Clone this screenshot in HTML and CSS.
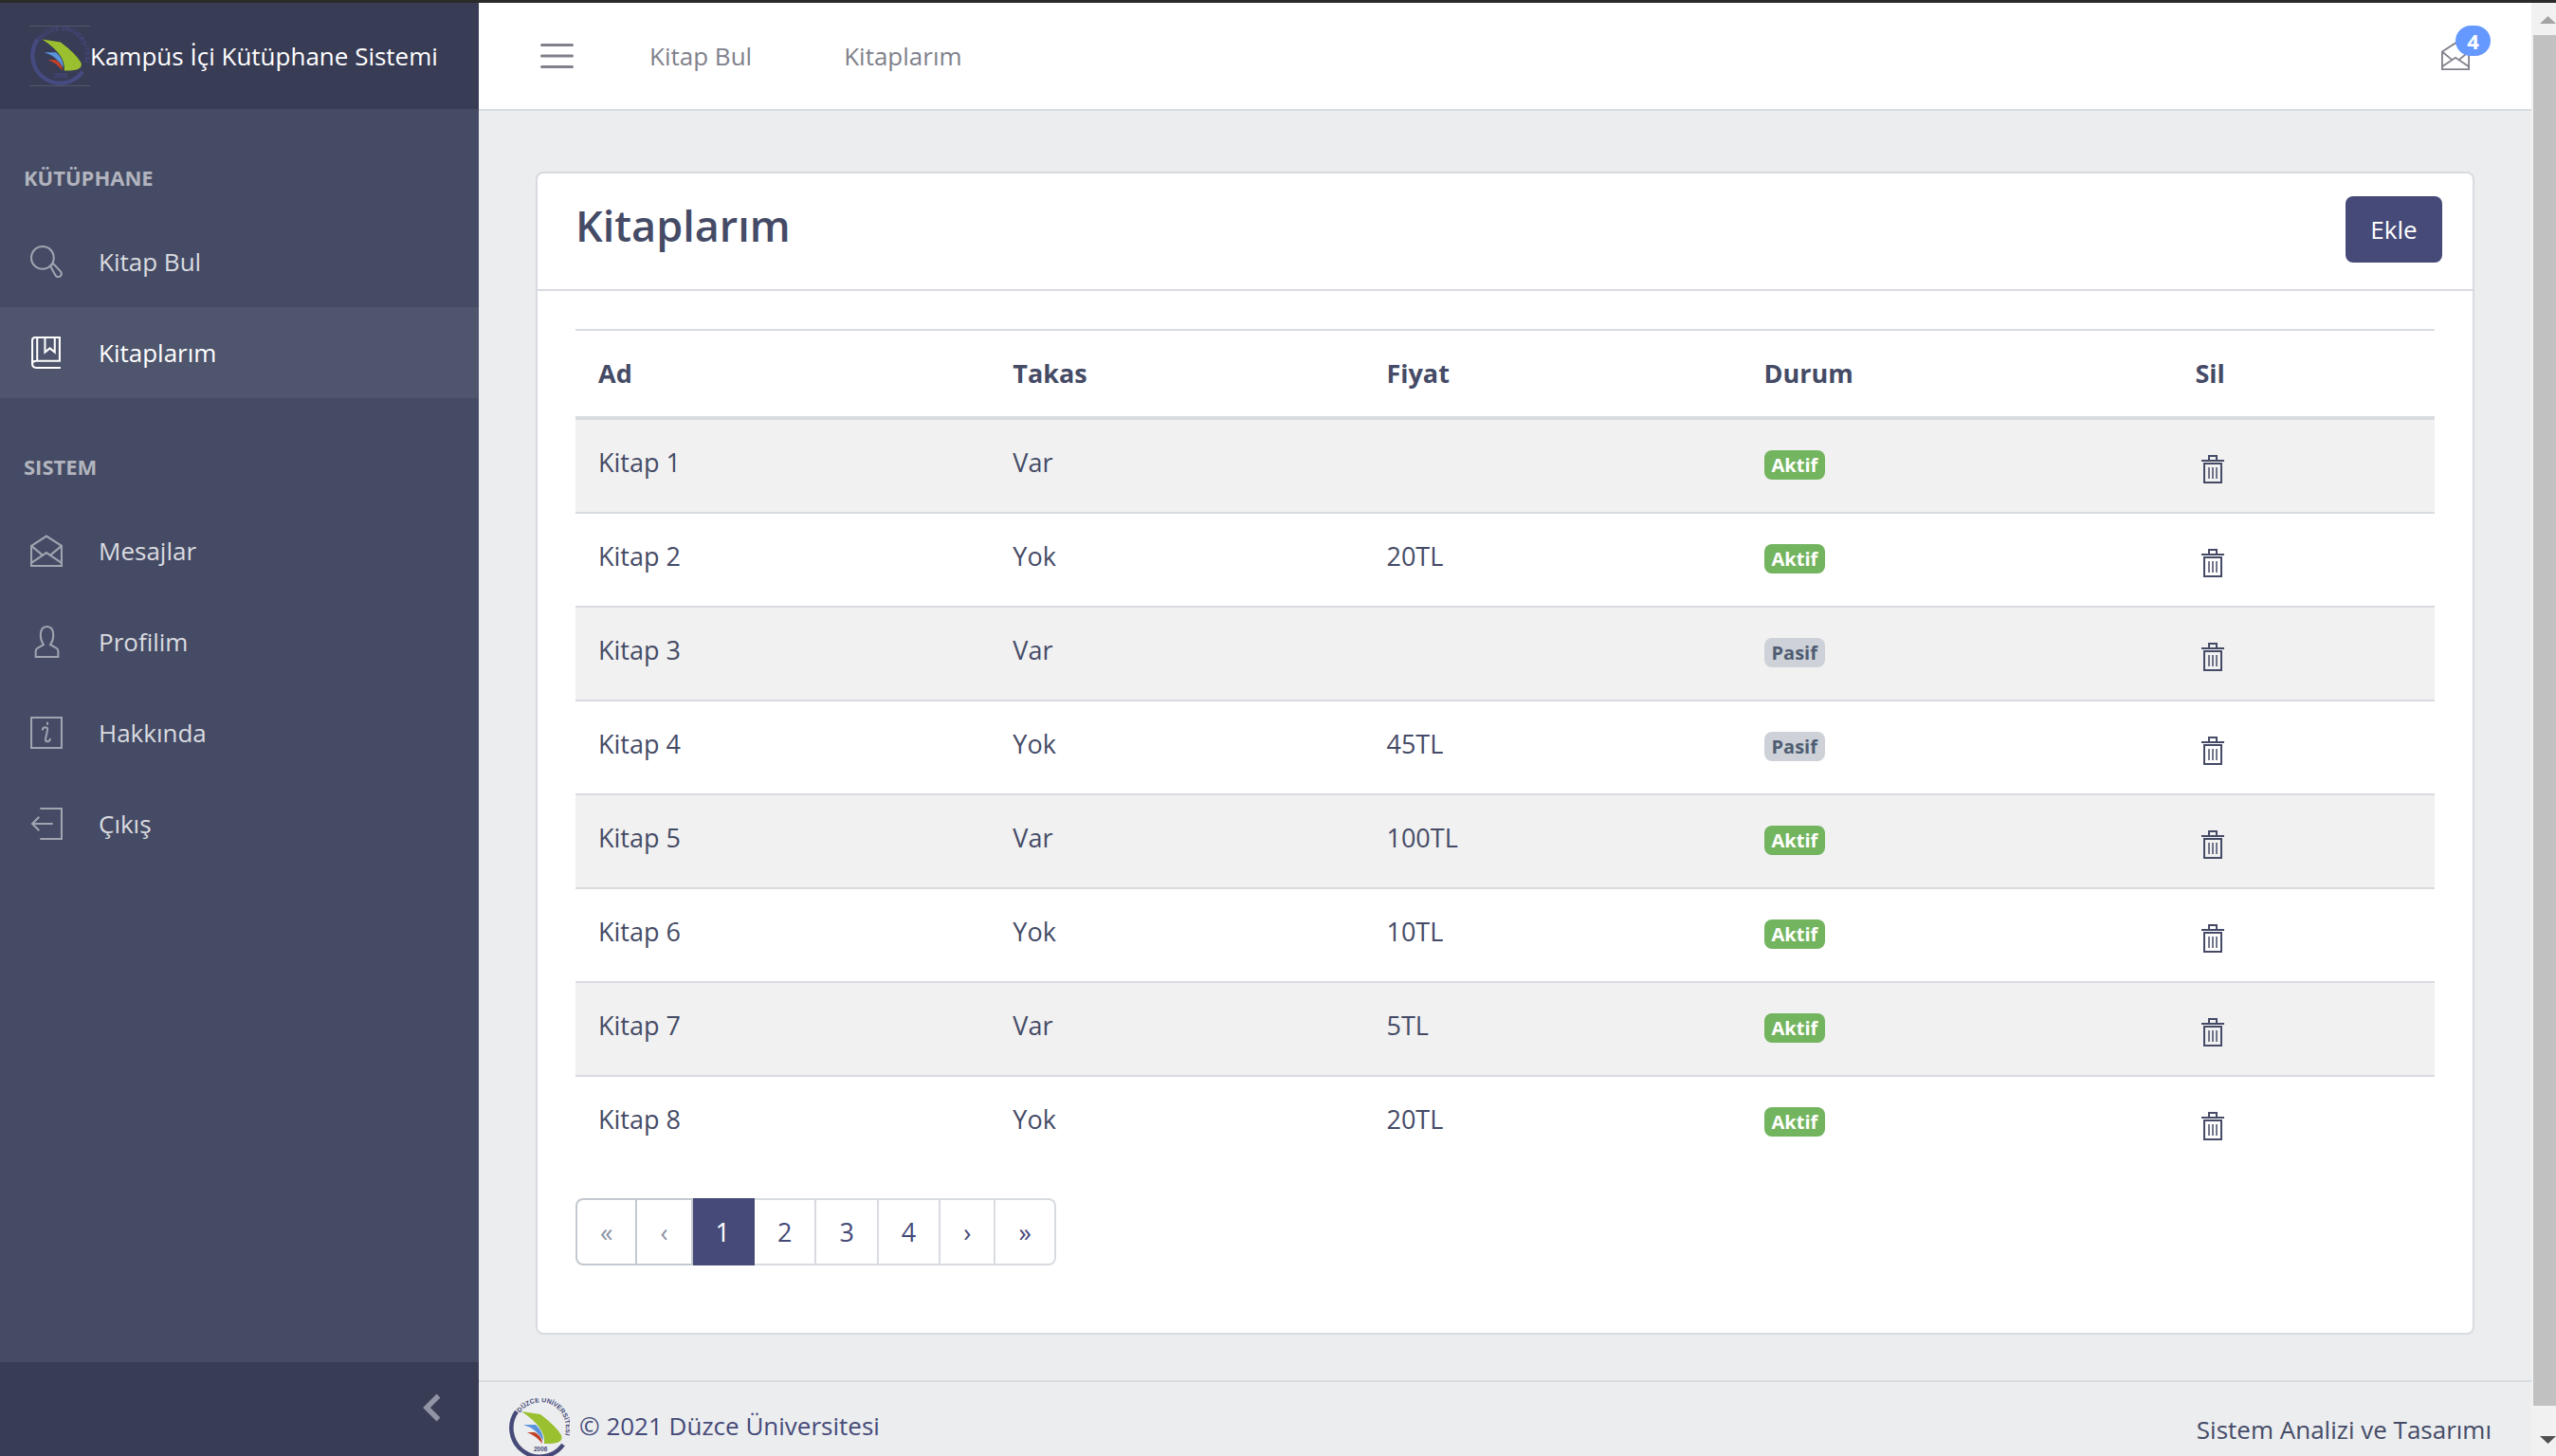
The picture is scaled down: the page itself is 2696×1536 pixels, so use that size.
FILE: index.html
```html
<!DOCTYPE html>
<html lang="tr">
<head>
<meta charset="utf-8">
<title>Kampüs İçi Kütüphane Sistemi</title>
<link rel="stylesheet" href="styles.css">
</head>
<body>
<svg class="sprite" aria-hidden="true">
  <defs>
    <symbol id="i-search" viewBox="0 0 33 33"><g fill="none" stroke="currentColor" stroke-width="2"><circle cx="12.500" cy="12.500" r="11.500"/><path d="M20.500 21l3-2.500 7.500 8q2 3-.5 5t-4.500-.5z"/></g></symbol>
    <symbol id="i-book" viewBox="0 0 33 33"><g fill="none" stroke="currentColor" stroke-width="2"><path d="M31 32H6q-4 0-4-4V4q0-3 3-3h25v24H6q-4 0-4 3.500M7 1v24"/><path d="M15 1v15l5-4 5 4V1"/></g></symbol>
    <symbol id="i-mail" viewBox="0 0 33 33"><g fill="none" stroke="currentColor" stroke-width="2"><path d="M1 11.500L16.500 1.500 32 11.500V32H1z"/><path d="M1 11.500L12.500 21M32 11.500L20.500 21M1 29L16.500 18.500 32 29"/></g></symbol>
    <symbol id="i-user" viewBox="0 0 33 33"><path d="M5.500 32v-5.500q0-2.500 2-3.500l6-3.500q-3-4-3-9.500 0-9 6.500-9t6.500 9q0 5.500-3 9.500l6 3.500q2 1 2 3.500V32z" fill="none" stroke="currentColor" stroke-width="2"/></symbol>
    <symbol id="i-info" viewBox="0 0 33 33"><g fill="none" stroke="currentColor" stroke-width="2"><path d="M1 1h31v31H1z"/><path d="M12.500 14q0-3 3-3 2.500 0 2 3l-2 9q0 2.500 2 2.500 2.500 0 3-3M17.500 5.500v3"/></g></symbol>
    <symbol id="i-exit" viewBox="0 0 33 33"><path d="M10 1h22v31H10M23 16.500H2M9 9.500l-7 7 7 7" fill="none" stroke="currentColor" stroke-width="2"/></symbol>
    <symbol id="i-trash" viewBox="0 0 24 30"><g fill="none" stroke="currentColor" stroke-width="2"><path d="M0 6h24M8 5V1h8v4M3 9h18v20H3z"/><path d="M8 13v12M12 13v12M16 13v12" stroke-width="1.500"/></g></symbol>
    <symbol id="i-menu" viewBox="0 0 35 28"><path d="M1.500 2.500h32M1.500 14h32M1.500 25.500h32" fill="none" stroke="currentColor" stroke-width="3" stroke-linecap="round"/></symbol>
    <symbol id="i-prev" viewBox="0 0 19 30"><path d="M16.500 2.500L4 15l12.500 12.500" fill="none" stroke="currentColor" stroke-width="5.500"/></symbol>
    <symbol id="logo" viewBox="0 0 64 64">
      <path d="M8 14A29.500 29.500 0 1 0 57 49" fill="none" stroke="currentColor" stroke-width="4.500"/>
      <path d="M13 14l20 3q17 13 22 22c3 7-5 9.500-18 9Q39 31 13 14z" fill="#9abf2f"/>
      <path d="M15 28h13q8 7 8 17-7-13-21-17z" fill="#5a94dc"/>
      <path d="M19 36h8q8 4 8 12-6-8-16-12z" fill="#bf4026"/>
      <path id="ring" d="M11.500 15.500A26.500 26.500 0 0 1 55 46" fill="none"/>
      <text class="logo-text" font-size="7"><textPath href="#ring">DÜZCE ÜNİVERSİTESİ</textPath></text>
      <text class="logo-text" font-size="6.500" x="26" y="56">2006</text>
    </symbol>
  </defs>
</svg>
<div class="topline"></div>
<div class="app">
  <aside class="sidebar">
    <a class="brand" href="#"><svg class="logo"><use href="#logo"/></svg><span>Kampüs İçi Kütüphane Sistemi</span></a>
    <nav class="side-nav">
      <h2 class="nav-title">KÜTÜPHANE</h2>
      <a class="nav-link" href="#"><svg class="icon"><use href="#i-search"/></svg>Kitap Bul</a>
      <a class="nav-link active" href="#"><svg class="icon"><use href="#i-book"/></svg>Kitaplarım</a>
      <h2 class="nav-title">SISTEM</h2>
      <a class="nav-link" href="#"><svg class="icon"><use href="#i-mail"/></svg>Mesajlar</a>
      <a class="nav-link" href="#"><svg class="icon"><use href="#i-user"/></svg>Profilim</a>
      <a class="nav-link" href="#"><svg class="icon"><use href="#i-info"/></svg>Hakkında</a>
      <a class="nav-link" href="#"><svg class="icon"><use href="#i-exit"/></svg>Çıkış</a>
    </nav>
    <button class="minimize" type="button" aria-label="Menüyü daralt"><svg class="chevron"><use href="#i-prev"/></svg></button>
  </aside>
  <div class="page">
    <header class="topbar">
      <button class="menu" type="button" aria-label="Menü"><svg class="menu-icon"><use href="#i-menu"/></svg></button>
      <nav class="top-nav"><a href="#">Kitap Bul</a><a href="#">Kitaplarım</a></nav>
      <a class="inbox" href="#" aria-label="Mesajlar"><svg class="inbox-icon"><use href="#i-mail"/></svg><span class="count">4</span></a>
    </header>
    <main class="content">
      <section class="card">
        <div class="card-header"><h1>Kitaplarım</h1><button class="add" type="button">Ekle</button></div>
        <div class="card-body">
          <table class="books">
            <colgroup><col class="c-name"><col class="c-swap"><col class="c-price"><col class="c-state"><col class="c-del"></colgroup>
            <thead><tr><th scope="col">Ad</th><th scope="col">Takas</th><th scope="col">Fiyat</th><th scope="col">Durum</th><th scope="col">Sil</th></tr></thead>
            <tbody>
              <tr><td>Kitap 1</td><td>Var</td><td></td><td><span class="badge on">Aktif</span></td><td><button class="del" type="button" aria-label="Sil"><svg class="trash"><use href="#i-trash"/></svg></button></td></tr>
              <tr><td>Kitap 2</td><td>Yok</td><td>20TL</td><td><span class="badge on">Aktif</span></td><td><button class="del" type="button" aria-label="Sil"><svg class="trash"><use href="#i-trash"/></svg></button></td></tr>
              <tr><td>Kitap 3</td><td>Var</td><td></td><td><span class="badge off">Pasif</span></td><td><button class="del" type="button" aria-label="Sil"><svg class="trash"><use href="#i-trash"/></svg></button></td></tr>
              <tr><td>Kitap 4</td><td>Yok</td><td>45TL</td><td><span class="badge off">Pasif</span></td><td><button class="del" type="button" aria-label="Sil"><svg class="trash"><use href="#i-trash"/></svg></button></td></tr>
              <tr><td>Kitap 5</td><td>Var</td><td>100TL</td><td><span class="badge on">Aktif</span></td><td><button class="del" type="button" aria-label="Sil"><svg class="trash"><use href="#i-trash"/></svg></button></td></tr>
              <tr><td>Kitap 6</td><td>Yok</td><td>10TL</td><td><span class="badge on">Aktif</span></td><td><button class="del" type="button" aria-label="Sil"><svg class="trash"><use href="#i-trash"/></svg></button></td></tr>
              <tr><td>Kitap 7</td><td>Var</td><td>5TL</td><td><span class="badge on">Aktif</span></td><td><button class="del" type="button" aria-label="Sil"><svg class="trash"><use href="#i-trash"/></svg></button></td></tr>
              <tr><td>Kitap 8</td><td>Yok</td><td>20TL</td><td><span class="badge on">Aktif</span></td><td><button class="del" type="button" aria-label="Sil"><svg class="trash"><use href="#i-trash"/></svg></button></td></tr>
            </tbody>
          </table>
          <nav class="pager" aria-label="Sayfalar">
            <button type="button" disabled>«</button><button type="button" disabled>‹</button><button class="current" type="button">1</button><button type="button">2</button><button type="button">3</button><button type="button">4</button><button type="button">›</button><button type="button">»</button>
          </nav>
        </div>
      </section>
    </main>
    <footer class="footer">
      <a class="owner" href="#"><svg class="logo"><use href="#logo"/></svg><span>© 2021 Düzce Üniversitesi</span></a>
      <span class="course">Sistem Analizi ve Tasarımı</span>
    </footer>
  </div>
  <div class="scrollbar" aria-hidden="true">
    <span class="arrow up"></span><span class="thumb"></span><span class="arrow down"></span>
  </div>
</div>
</body>
</html>
```
FILE: styles.css
```css
* { box-sizing: border-box; }
body {
  margin: 0;
  height: 100vh;
  overflow: hidden;
  display: flex;
  flex-direction: column;
  background: #ebedef;
  color: #454b66;
  font: 26px/42px "Open Sans", "Noto Sans", sans-serif;
}
a { color: inherit; text-decoration: none; }
button { font: inherit; color: inherit; background: none; border: 0; padding: 0; margin: 0; }
svg { display: block; flex: none; }
.sprite { position: absolute; width: 0; height: 0; }
.topline { flex: none; height: 3px; background: #2b2b2b; }
.app { flex: 1; min-height: 0; display: flex; }

/* sidebar */
.sidebar { flex: none; width: 505px; display: flex; flex-direction: column; background: #454b64; color: #dadbe0; }
.brand { flex: none; display: flex; align-items: center; height: 112px; padding-left: 31px; background: #383c55; color: #fff; white-space: nowrap; }
.brand .logo { color: #454a80; border: solid #53576c; border-width: 1px 0; }
.logo { width: 64px; height: 64px; }
.logo-text { font-family: "Liberation Sans", sans-serif; font-weight: bold; fill: currentColor; }
.side-nav { flex: 1; }
.nav-title { margin: 0; padding: 51px 25px 20px; font-size: 22px; font-weight: 700; color: #b1b4be; }
.nav-link { display: flex; align-items: center; gap: 38px; height: 96px; padding-left: 32px; }
.nav-link .icon { width: 34px; height: 34px; color: #a0a4b1; }
.nav-link.active, .nav-link.active .icon { color: #fff; }
.nav-link.active { background: #4e556d; }
.minimize { flex: none; display: flex; justify-content: flex-end; align-items: center; height: 99px; padding: 0 40px 4px 0; background: #383c55; color: #9094a4; }
.chevron { width: 19px; height: 30px; }

/* top bar */
.page { flex: 1; min-width: 0; display: flex; flex-direction: column; }
.topbar { flex: none; display: flex; align-items: center; height: 114px; padding: 0 65px; border-bottom: 2px solid #d8dbe0; background: #fff; color: #80818b; }
.menu-icon { width: 35px; height: 28px; }
.top-nav { flex: 1; display: flex; gap: 97px; padding-left: 80px; }
.inbox { position: relative; }
.inbox-icon { width: 30px; height: 30px; }
.count { position: absolute; left: 15px; top: -17px; width: 37px; height: 32px; border-radius: 16px; background: #69f; color: #fff; font-size: 22px; font-weight: 700; line-height: 32px; text-align: center; }

/* card */
.content { flex: none; padding: 64px 60px 48px; }
.card { border: 2px solid #d8dbe0; border-radius: 8px; background: #fff; font-size: 27px; }
.card-header { display: flex; justify-content: space-between; align-items: flex-start; height: 124px; padding: 24px 32px 0 40px; border-bottom: 2px solid #d8dbe0; }
h1 { margin: 0; font-size: 45px; line-height: 62px; font-weight: 600; }
.add { width: 102px; height: 70px; border-radius: 8px; background: #464a78; color: #fff; font-size: 26px; }
.card-body { padding: 40px 40px 71px; }
.books { width: 100%; table-layout: fixed; border-collapse: separate; border-spacing: 0; border-top: 2px solid #d8dbe0; }
.c-name { width: 22.3%; }
.c-swap { width: 20.1%; }
.c-price { width: 20.3%; }
.c-state { width: 23.2%; }
.c-del { width: 14.1%; }
.books th { height: 94px; padding: 0 24px; border-bottom: 4px solid #d8dbe0; text-align: left; font-weight: 700; }
.books td { height: 99px; padding: 24px 24px 0; border-top: 2px solid #d8dbe0; vertical-align: top; }
.books tr:first-child td { height: 97px; border-top: 0; }
.books tbody tr:nth-child(odd) { background: #f1f1f1; }
.badge { display: inline-block; height: 31px; padding: 0 8px; border-radius: 8px; font-size: 20px; line-height: 32px; font-weight: 700; vertical-align: middle; }
.on { background: #73b45f; color: #fff; }
.off { background: #ced2d8; color: #4f5d73; }
.del { display: block; padding: 13px 7px 0; }
.trash { width: 24px; height: 30px; }
.pager { display: flex; margin-top: 31px; color: #464a78; }
.pager button { height: 71px; padding: 0 24px; border: solid #d8dbe0; border-width: 2px 2px 2px 0; }
.pager button:disabled { color: #8a93a2; border-color: #c4c9d0; }
.pager button:first-child { border-left-width: 2px; border-radius: 8px 0 0 8px; }
.pager button:last-child { border-radius: 0 8px 8px 0; }
.pager .current { background: #464a78; border-color: #464a78; color: #fff; }

/* footer */
.footer { flex: 1; min-height: 0; display: flex; justify-content: space-between; align-items: flex-start; padding: 17px 42px 0 32px; border-top: 2px solid #d8dbe0; }
.owner { display: flex; color: #464a78; gap: 10px; }
.owner span { padding-top: 8px; }
.course { padding-top: 12px; }

/* scrollbar */
.scrollbar { flex: none; width: 26px; display: flex; flex-direction: column; align-items: flex-end; padding: 14px 0 13px 2px; background: #f1f1f1; }
.thumb { flex: 1; width: 100%; margin: 12px 0 32px; background: #c1c1c1; }
.arrow { width: 17px; height: 8px; }
.up { background: #a3a3a3; clip-path: polygon(50% 0, 100% 100%, 0 100%); }
.down { background: #505050; clip-path: polygon(0 0, 100% 0, 50% 100%); }
```
